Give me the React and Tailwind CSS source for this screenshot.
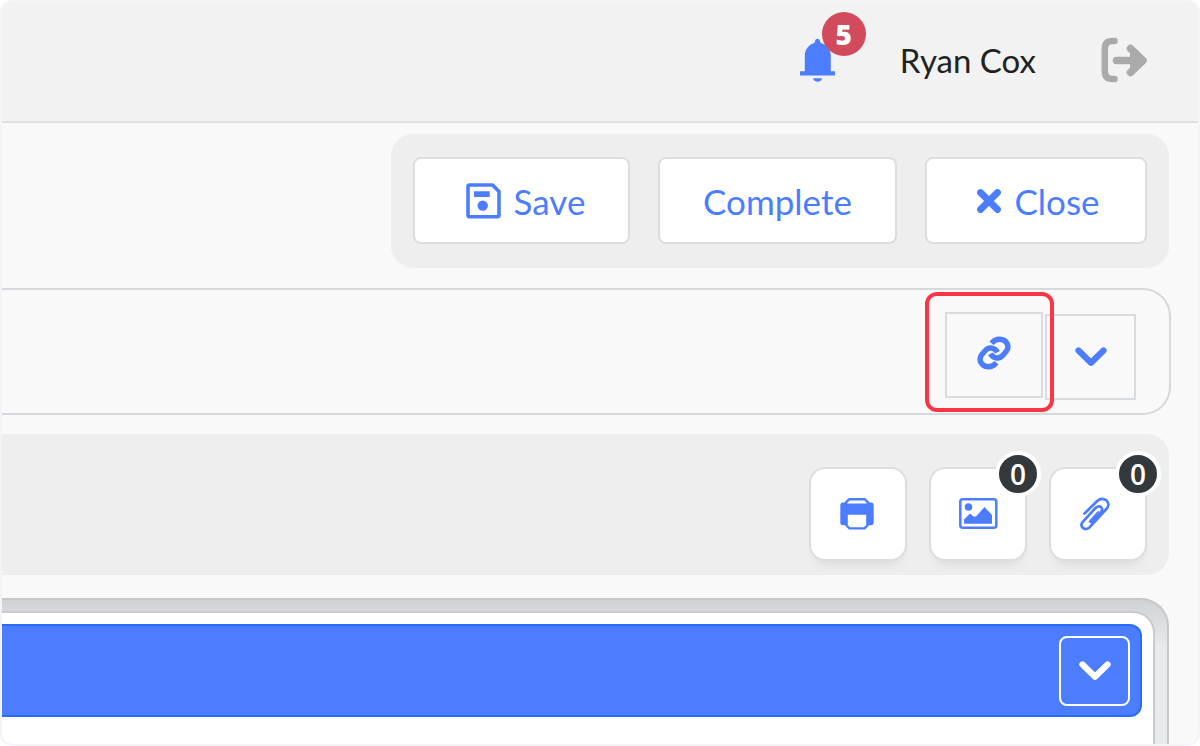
import React from "react";

function BellIcon() {
  return (
    <svg width="36" height="44" viewBox="0 0 36 44" fill="currentColor" aria-hidden="true">
      <path d="M17.5.7c1.2 0 2 .9 2.4 2l.7 2.2C26.8 6.7 30.8 11.4 30.8 17.500V33.300H35V37.600H0V33.300H4.800V17.500C4.800 11.400 8.600 6.700 14.400 4.900l.7-2.200c.4-1.100 1.200-2 2.400-2z" />
      <path d="M13 40.200h9.200c-.8 2.400-2.500 3.600-4.600 3.600s-3.800-1.200-4.600-3.600z" />
    </svg>
  );
}

function LogoutIcon() {
  return (
    <svg width="48" height="46" viewBox="0 0 48 46" fill="none" stroke="currentColor" strokeLinecap="round" strokeLinejoin="round" aria-hidden="true">
      <path d="M14.500 4H12.500Q4.800 4 4.800 11.700V34.300Q4.800 42 12.500 42H14.500" strokeWidth="6.500" />
      <path d="M16.500 23.500H38" strokeWidth="7.500" />
      <path d="M30.500 11.500L43 23.500L30.500 35.500" strokeWidth="7.500" />
      <path d="M31 13L43 23.500L31 34z" fill="currentColor" strokeWidth="2" />
    </svg>
  );
}

function SaveIcon() {
  return (
    <svg width="36" height="36" viewBox="0 0 36 36" aria-hidden="true">
      <path d="M3.500 2H26.500L33 8.500V32Q33 33.800 31.500 33.800H3.500Q2 33.800 2 32V3.500Q2 2 3.500 2z" fill="none" stroke="currentColor" strokeWidth="3.600" strokeLinejoin="round" />
      <path d="M8 8.200H23.700V14H8z" fill="currentColor" />
      <circle cx="16.700" cy="22.600" r="5.200" fill="currentColor" />
    </svg>
  );
}

function CloseIcon() {
  return (
    <svg width="26" height="26" viewBox="0 0 26 26" fill="none" stroke="currentColor" strokeWidth="6.800" strokeLinecap="round" aria-hidden="true">
      <path d="M4.500 4.500L21.500 21.500M21.500 4.500L4.500 21.500" />
    </svg>
  );
}

function ChevronIcon() {
  return (
    <svg width="32" height="20" viewBox="0 0 32 20" fill="none" stroke="currentColor" strokeWidth="6.200" strokeLinecap="round" strokeLinejoin="round" aria-hidden="true">
      <path d="M3.500 3.500L16 15.800L28.500 3.500" />
    </svg>
  );
}

function LinkIcon() {
  return (
    <svg width="34" height="34" viewBox="0 0 34 34" fill="none" stroke="currentColor" strokeWidth="5.400" aria-hidden="true">
      <path d="M14.500 7.200C17 4.300 20 3 23 3.200C29.500 3.600 33 10 29.500 15L25.500 19.700C22 23.500 16 22.500 13.500 17.800" />
      <path d="M14.500 7.200C17 4.300 20 3 23 3.200C29.500 3.600 33 10 29.500 15L25.500 19.700C22 23.500 16 22.500 13.500 17.800" transform="rotate(180 17 17)" />
    </svg>
  );
}

function PrinterIcon() {
  return (
    <svg className="mr-[2px]" width="34" height="32" viewBox="0 0 34 32" aria-hidden="true">
      <path d="M3 4.500H31Q33.700 4.500 33.700 7.500V24.500Q33.700 27.300 31 27.300H3Q.3 27.300 .3 24.500V7.500Q.3 4.500 3 4.500z" fill="currentColor" />
      <path d="M9 1.300H25L28 4.300V6.700H6V4.300z" fill="white" stroke="currentColor" strokeWidth="2.400" strokeLinejoin="round" />
      <path d="M6.600 15.500H27.400V27.500L24.500 30.400H9.500L6.600 27.500z" fill="white" stroke="currentColor" strokeWidth="2.400" strokeLinejoin="round" />
    </svg>
  );
}

function ImageIcon() {
  return (
    <svg width="39" height="31" viewBox="0 0 39 31" fill="currentColor" aria-hidden="true">
      <rect x="1.300" y="1.300" width="36" height="28.400" rx="2.500" fill="none" stroke="currentColor" strokeWidth="2.500" />
      <circle cx="9.500" cy="9" r="3.800" />
      <path d="M5 25.800V21.500L11 15.500L14.500 18.500H17L25.500 9L33 17V25.800z" />
    </svg>
  );
}

function PaperclipIcon() {
  return (
    <svg className="mr-[6px]" width="30" height="34" viewBox="0 0 30 34" fill="none" stroke="currentColor" strokeWidth="2.700" strokeLinecap="round" strokeLinejoin="round" aria-hidden="true">
      <path d="M4.500 16.500L17.500 3.800C20.500 1 24.700 1.300 26.900 3.800S28.600 9.700 26.400 12L10 29.800C7.800 32.300 4.700 32.800 2.800 30.800S1.200 26.500 3.200 24.400L15 11.500C17 9.300 19.600 8.800 21.200 10.400S22.200 13.700 20.500 15.500L11 25" />
      <path d="M9.500 24.500L18 15" strokeWidth="1.800" />
    </svg>
  );
}

function ActionButton({ icon, children, className }) {
  return (
    <button
      type="button"
      className={`flex h-[87px] items-center justify-center rounded-lg border-2 border-[#dddddd] bg-white text-[35px] leading-10 text-[#4d7dff] ${className}`}
    >
      {icon}
      <span>{children}</span>
    </button>
  );
}

function ToolButton({ label, count, children }) {
  return (
    <button
      type="button"
      aria-label={label}
      className="relative flex h-[94px] w-[98px] items-center justify-center rounded-2xl border-2 border-[#dddddd] bg-white text-[#4d7dff] shadow-[0_10px_12px_-6px_rgba(0,0,0,0.08)]"
    >
      {children}
      {count !== undefined && (
        <span className="absolute -right-4 -top-[18px] flex size-[46px] items-center justify-center rounded-full border-4 border-white bg-[#33383c] font-['Open_Sans',sans-serif] text-[28px] font-semibold leading-none text-white">
          {count}
        </span>
      )}
    </button>
  );
}

export default function App() {
  return (
    <div className="bg-white font-[Lato,sans-serif]">
      <div className="flex min-h-screen flex-col overflow-hidden rounded-xl border-2 border-[#f3f3f8] bg-[#f9f9f9]">
        <header className="flex h-[121px] items-center justify-end border-b-2 border-[#e1e1e1] bg-[#f2f2f2] pb-1 pr-[50px]">
          <button type="button" aria-label="Notifications" className="relative mr-16 text-[#4d7dff]">
            <BellIcon />
            <span className="absolute -right-[30px] -top-[26px] flex size-[44px] items-center justify-center rounded-full bg-[#d14b5d] font-['Open_Sans',sans-serif] text-[28px] font-extrabold leading-none text-white">
              5
            </span>
          </button>
          <span className="mr-16 text-[33px] leading-10 text-[#222222]">Ryan Cox</span>
          <button type="button" aria-label="Log out" className="text-[#aaaaaa]">
            <LogoutIcon />
          </button>
        </header>

        <main className="flex flex-1 flex-col pt-[11px]">
          <div className="mr-[29px] flex gap-7 self-end rounded-[22px] bg-[#eeeeee] px-[22px] pb-6 pt-[23px]">
            <ActionButton className="w-[217px] gap-3 pl-2" icon={<SaveIcon />}>Save</ActionButton>
            <ActionButton className="w-[239px]">Complete</ActionButton>
            <ActionButton className="w-[222px] gap-3 pl-1" icon={<CloseIcon />}>Close</ActionButton>
          </div>

          <section className="mr-[27px] mt-5 flex h-[127px] items-center justify-end gap-[2px] rounded-r-[28px] border-2 border-l-0 border-[#d5d9dc] pr-[33px] pt-[10px]">
            <div className="relative pb-1">
              <button
                type="button"
                aria-label="Copy link"
                className="flex h-[86px] w-[98px] items-center justify-center border-2 border-[#d8dcdf] pb-1 text-[#4d7dff]"
              >
                <LinkIcon />
              </button>
              <div className="pointer-events-none absolute -bottom-[10px] -left-5 -right-[11px] -top-5 rounded-xl border-4 border-[#fa3545]" />
            </div>
            <button
              type="button"
              aria-label="Expand details"
              className="flex h-[86px] w-[91px] items-center justify-center border-2 border-[#d8dcdf] text-[#4d7dff]"
            >
              <ChevronIcon />
            </button>
          </section>

          <div className="mr-[29px] mt-[19px] flex h-[141px] items-center justify-end gap-[22px] rounded-r-[22px] bg-[#eeeeee] pr-[22px] pt-[18px]">
            <ToolButton label="Print"><PrinterIcon /></ToolButton>
            <ToolButton label="Images" count={0}><ImageIcon /></ToolButton>
            <ToolButton label="Attachments" count={0}><PaperclipIcon /></ToolButton>
          </div>

          <section className="mr-[29px] mt-[23px] flex flex-1 flex-col rounded-tr-[28px] border-r-2 border-t-2 border-[#c5c7c9] bg-[linear-gradient(to_bottom,#d0d2d6,#e8eaee_48px)] pr-3 pt-[11px]">
            <div className="flex-1 rounded-tr-[22px] border-r-2 border-t-2 border-[#c9cbcd] bg-white pb-5 pr-[11px] pt-[11px]">
              <div className="flex h-[93px] items-center justify-end rounded-r-[12px] border-y-2 border-r-2 border-[#276cff] bg-[#4d7dff] pr-[10px]">
                <button
                  type="button"
                  aria-label="Collapse section"
                  className="flex h-[70px] w-[71px] items-center justify-center rounded-lg border-2 border-white text-white"
                >
                  <ChevronIcon />
                </button>
              </div>
            </div>
          </section>
        </main>
      </div>
    </div>
  );
}
